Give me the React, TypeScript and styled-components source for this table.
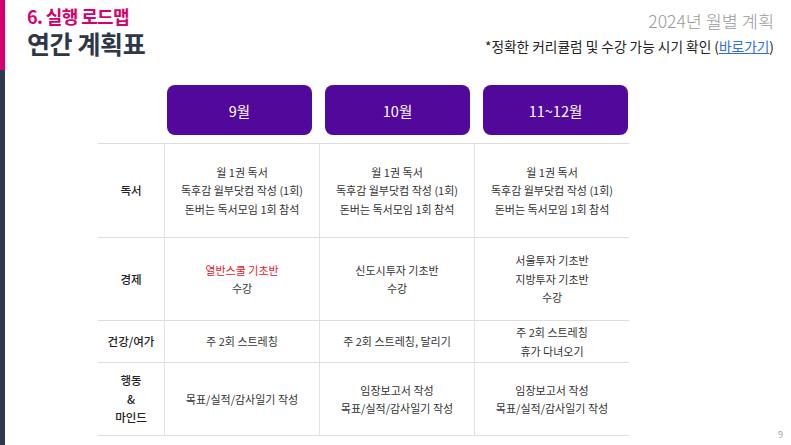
import React from 'react';
import styled, { createGlobalStyle } from 'styled-components';

const GlobalStyle = createGlobalStyle`
    html, body {
        margin: 0;
        padding: 0;
        background: #ffffff;
    }
    body {
        font-family: 'Noto Sans CJK KR', 'Noto Sans', sans-serif;
        color: #333333;
    }
`;

const Slide = styled.div`
    position: relative;
    width: 791px;
    height: 445px;
    display: flex;
    overflow: hidden;
    background: #ffffff;
`;

const SideBar = styled.div`
    width: 5px;
    display: flex;
    flex-direction: column;
`;

const SideSegment = styled.div<{ $color: string; $height?: number }>`
    background: ${(p) => p.$color};
    height: ${(p) => (p.$height ? `${p.$height}px` : 'auto')};
    flex: ${(p) => (p.$height ? '0 0 auto' : '1')};
`;

const Main = styled.div`
    flex: 1;
    display: flex;
    flex-direction: column;
`;

const TopBar = styled.div`
    height: 70px;
    display: flex;
    justify-content: space-between;
    align-items: flex-start;
    padding: 0 17px 0 22px;
`;

const TitleBlock = styled.div`
    display: flex;
    flex-direction: column;
    gap: 2px;
    padding-top: 6px;
`;

const Kicker = styled.div`
    font-size: 18px;
    font-weight: 700;
    color: #d4006e;
    line-height: 21px;
    letter-spacing: -0.6px;
`;

const Title = styled.h1`
    margin: 0;
    font-size: 25px;
    font-weight: 700;
    color: #2e3747;
    line-height: 28px;
    letter-spacing: -0.4px;
`;

const MetaBlock = styled.div`
    display: flex;
    flex-direction: column;
    align-items: flex-end;
    padding-top: 10px;
    gap: 5px;
`;

const PlanLabel = styled.div`
    font-size: 17.5px;
    font-weight: 300;
    color: #9b9b9b;
    line-height: 22px;
`;

const Note = styled.div`
    font-size: 13.7px;
    color: #222222;
    line-height: 18px;
`;

const Link = styled.a`
    color: #2f6fd6;
    text-decoration: underline;
`;

const TableWrap = styled.div`
    margin-left: 93px;
    width: 531px;
    display: flex;
    flex-direction: column;
`;

const MonthRow = styled.div`
    display: flex;
    gap: 13px;
    padding: 15px 0 0 69px;
    height: 73px;
    box-sizing: border-box;
`;

const MonthButton = styled.div`
    width: 145px;
    height: 50px;
    border-radius: 8px;
    background: #52089a;
    color: #ffffff;
    font-size: 14.5px;
    display: flex;
    align-items: center;
    justify-content: center;
`;

const Grid = styled.div`
    display: grid;
    grid-template-columns: 66px repeat(3, 155px);
    grid-template-rows: 94px 83px 42px 73px;
    border-top: 1px solid #dddddd;
`;

const Cell = styled.div<{ $label?: boolean }>`
    display: flex;
    flex-direction: column;
    align-items: center;
    justify-content: center;
    text-align: center;
    font-size: ${(p) => (p.$label ? '11.5px' : '11px')};
    line-height: 18.5px;
    color: ${(p) => (p.$label ? '#222222' : '#333333')};
    font-weight: ${(p) => (p.$label ? 500 : 400)};
    border-bottom: 1px solid #dddddd;
    border-left: ${(p) => (p.$label ? 'none' : '1px solid #e2e2e2')};
    box-sizing: border-box;
`;

const Highlight = styled.span`
    color: #e0202a;
`;

const PageNumber = styled.div`
    position: absolute;
    right: 8px;
    bottom: 4px;
    font-size: 9px;
    color: #a0a0a0;
`;

type Line = { text: string; red?: boolean };

const rows: { label: string[]; cells: Line[][] }[] = [
    {
        label: ['독서'],
        cells: [
            [{ text: '월 1권 독서' }, { text: '독후감 월부닷컴 작성 (1회)' }, { text: '돈버는 독서모임 1회 참석' }],
            [{ text: '월 1권 독서' }, { text: '독후감 월부닷컴 작성 (1회)' }, { text: '돈버는 독서모임 1회 참석' }],
            [{ text: '월 1권 독서' }, { text: '독후감 월부닷컴 작성 (1회)' }, { text: '돈버는 독서모임 1회 참석' }],
        ],
    },
    {
        label: ['경제'],
        cells: [
            [{ text: '열반스쿨 기초반', red: true }, { text: '수강' }],
            [{ text: '신도시투자 기초반' }, { text: '수강' }],
            [{ text: '서울투자 기초반' }, { text: '지방투자 기초반' }, { text: '수강' }],
        ],
    },
    {
        label: ['건강/여가'],
        cells: [
            [{ text: '주 2회 스트레칭' }],
            [{ text: '주 2회 스트레칭, 달리기' }],
            [{ text: '주 2회 스트레칭' }, { text: '휴가 다녀오기' }],
        ],
    },
    {
        label: ['행동', '&', '마인드'],
        cells: [
            [{ text: '목표/실적/감사일기 작성' }],
            [{ text: '임장보고서 작성' }, { text: '목표/실적/감사일기 작성' }],
            [{ text: '임장보고서 작성' }, { text: '목표/실적/감사일기 작성' }],
        ],
    },
];

const months = ['9월', '10월', '11~12월'];

export default function App() {
    return (
        <>
            <GlobalStyle />
            <Slide>
                <SideBar>
                    <SideSegment $color="#d4006e" $height={70} />
                    <SideSegment $color="#2e3a4f" />
                </SideBar>
                <Main>
                    <TopBar>
                        <TitleBlock>
                            <Kicker>6. 실행 로드맵</Kicker>
                            <Title>연간 계획표</Title>
                        </TitleBlock>
                        <MetaBlock>
                            <PlanLabel>2024년 월별 계획</PlanLabel>
                            <Note>
                                *정확한 커리큘럼 및 수강 가능 시기 확인 (<Link href="#">바로가기</Link>)
                            </Note>
                        </MetaBlock>
                    </TopBar>
                    <TableWrap>
                        <MonthRow>
                            {months.map((m) => (
                                <MonthButton key={m}>{m}</MonthButton>
                            ))}
                        </MonthRow>
                        <Grid>
                            {rows.map((row) => (
                                <React.Fragment key={row.label.join('')}>
                                    <Cell $label>
                                        {row.label.map((l) => (
                                            <span key={l}>{l}</span>
                                        ))}
                                    </Cell>
                                    {row.cells.map((lines, i) => (
                                        <Cell key={i}>
                                            {lines.map((line, j) =>
                                                line.red ? (
                                                    <Highlight key={j}>{line.text}</Highlight>
                                                ) : (
                                                    <span key={j}>{line.text}</span>
                                                )
                                            )}
                                        </Cell>
                                    ))}
                                </React.Fragment>
                            ))}
                        </Grid>
                    </TableWrap>
                </Main>
                <PageNumber>9</PageNumber>
            </Slide>
        </>
    );
}
